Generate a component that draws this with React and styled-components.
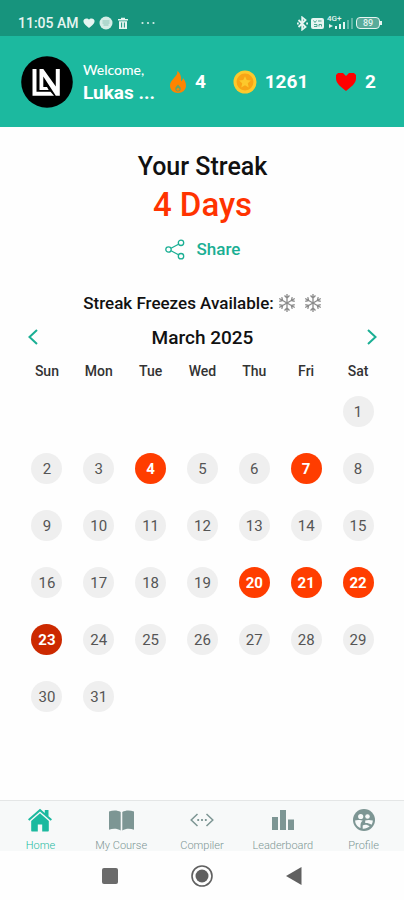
import React from "react";
import styled, { createGlobalStyle } from "styled-components";

const WEEKDAYS = ["Sun", "Mon", "Tue", "Wed", "Thu", "Fri", "Sat"];
const STREAK_DAYS = [4, 7, 20, 21, 22];
const TODAY = 23;
const FIRST_WEEKDAY = 6;
const DAYS_IN_MONTH = 31;

const StatusBar = () => (
  <StatusRow>
    <StatusGroup>
      <span>11:05 AM</span>
      <svg width="12" height="12" viewBox="0 0 12 12" fill="#e6f5f1">
        <path d="M3.5 1.5C4.5 1.5 5.5 2 6 2.5 6.5 2 7.5 1.5 8.5 1.5 10.5 1.5 12 3 11.5 5 11 7 8.5 9 6 11 3.5 9 1 7 .5 5 0 3 1.5 1.5 3.5 1.5z" />
      </svg>
      <svg width="14" height="14" viewBox="0 0 14 14">
        <circle cx="7" cy="7" r="6.5" fill="#d5ede7" />
        <path d="M3.5 5h7M3.5 7h7M4.5 9h5" stroke="#8cc4b6" strokeWidth="1.2" />
      </svg>
      <TrashIcon width="12" height="13" viewBox="0 0 12 13" fill="#e6f5f1">
        <path d="M1 2h3V.8h4V2h3v1.5H1zM2 4.2h8V12H2z" />
        <path d="M4.6 5.5v5M7.4 5.5v5" stroke="#17947d" strokeWidth="1" />
      </TrashIcon>
      <svg width="14" height="4" viewBox="0 0 14 4" fill="#d5ede7">
        <circle cx="1.5" cy="2" r="1.1" />
        <circle cx="7" cy="2" r="1.1" />
        <circle cx="12.5" cy="2" r="1.1" />
      </svg>
    </StatusGroup>
    <SystemIcons>
      <svg width="11" height="15" viewBox="0 0 11 15" fill="none" stroke="#e6f5f1" strokeWidth="1.8">
        <path d="M1.5 4l7 7-3.3 2.6V1.4L8.5 4l-7 7" />
        <path d="M0 7.5h1.8M9.2 7.5H11" />
      </svg>
      <svg width="13" height="11" viewBox="0 0 13 11">
        <rect width="13" height="11" rx="2" fill="#e6f5f1" />
        <path d="M2.5 2.5l1.5 2 1.5-2M7 3h3.5M3 6.5h3v2H3M8 8.5v-2h2.5v2" fill="none" stroke="#4ba793" strokeWidth="1" />
      </svg>
      <Signal>
        <SignalLabel>4G+</SignalLabel>
        <svg width="26" height="12" viewBox="0 0 26 12" fill="#e6f5f1">
          <path d="M2 7l4 2-4 2zM8 9h2v3H8zM12 7h2v5h-2zM16 5h2v7h-2z" />
          <path d="M20 3h2v9h-2zM24 1h2v11h-2z" opacity=".35" />
        </svg>
      </Signal>
      <Battery>
        <span>89</span>
      </Battery>
    </SystemIcons>
  </StatusRow>
);

const LogoAvatar = () => (
  <svg width="52" height="52" viewBox="0 0 52 52" role="img" aria-label="Lukas">
    <circle cx="26" cy="26" r="25.8" fill="#000" />
    <g fill="#fff">
      <path d="M11.5 13h4v22.7h14l3.5 4H11.5z" />
      <path d="M18.5 13h3.8l12.5 17.5V13h4v26.7h-4L22.3 20.5V31h3.7l1.7 3h-9.2z" />
    </g>
  </svg>
);

const FlameIcon = () => (
  <svg width="18" height="24" viewBox="0 0 18 24">
    <path
      d="M8.2 1c.7 3-1.2 4.6-3.4 7.3C2.7 10.9 1 12.8 1 15.5 1 20 4.5 23 9 23s8-3 8-7.5c0-3.2-1.5-5.5-3-7.5-.2 1.5-.8 2.6-2 3.2C12.5 7 11.5 3 8.2 1z"
      fill="#ff8400"
    />
    <path d="M9 14.5c1.6 1.7 2.7 2.6 2.7 4.2a2.7 2.7 0 0 1-5.4 0c0-1.6 1.1-2.5 2.7-4.2z" fill="#5fa66b" />
    <path d="M9 18a1.5 1.5 0 0 1 1 2.6H8A1.5 1.5 0 0 1 9 18z" fill="#ff8400" />
  </svg>
);

const CoinIcon = () => (
  <svg width="24" height="24" viewBox="0 0 25 25">
    <circle cx="12.5" cy="12.5" r="12" fill="#fdc92c" />
    <circle cx="12.5" cy="12.5" r="8.8" fill="#f8a516" />
    <path
      d="M12.5 6.5l1.8 4 4.3.4-3.2 2.9 1 4.3-3.9-2.3-3.9 2.3 1-4.3-3.2-2.9 4.3-.4z"
      fill="#fdc92c"
    />
  </svg>
);

const HeartIcon = () => (
  <svg width="22" height="20" viewBox="0 0 22 20">
    <path d="M11 19C6 15 1 11.5 1 6.500V3l2-2h5l3 3 3-3h5l2 2v3.500C21 11.500 16 15 11 19z" fill="#f00" />
  </svg>
);

const ShareIcon = () => (
  <svg width="20" height="21" viewBox="0 0 20 21" fill="none" stroke="currentColor" strokeWidth="1.3">
    <circle cx="3.5" cy="10.5" r="2.7" />
    <circle cx="16" cy="3.8" r="2.7" />
    <circle cx="16" cy="17.2" r="2.7" />
    <path d="M6 9.2l7.5-4M6 11.8l7.5 4" />
  </svg>
);

const SnowflakeIcon = () => (
  <svg width="18" height="20" viewBox="0 0 18 20" fill="none" stroke="#8a8a8a" strokeWidth="1.3">
    {[0, 60, 120, 180, 240, 300].map((angle) => (
      <path key={angle} d="M9 10V1M6.5 2.5L9 5l2.5-2.5" transform={`rotate(${angle} 9 10)`} />
    ))}
  </svg>
);

const HomeIcon = () => (
  <svg width="24" height="24" viewBox="0 0 24 24" fill="currentColor">
    <path d="M12 .8L0 11.3l1.3 1.5L12 3.5l10.7 9.3 1.3-1.5-3.5-3.1V2h-3.7v3z" />
    <path d="M12 5.3L3.2 13v9.5c0 .6.4 1 1 1h5.6v-7h4.4v7h5.6c.6 0 1-.4 1-1V13z" />
  </svg>
);

const BookIcon = () => (
  <svg width="25" height="21" viewBox="0 0 25 21" fill="currentColor">
    <path d="M0 1.5C4 0 8.5 0 11.7 2v18.5C8.5 18.5 4 18.3 0 19.7zM25 1.5C21 0 16.5 0 13.3 2v18.5c3.2-2 7.7-2.2 11.7-.8z" />
  </svg>
);

const CodeIcon = () => (
  <svg width="24" height="14" viewBox="0 0 24 14" fill="none" stroke="currentColor" strokeWidth="1.5">
    <path d="M7.5 1L1.2 7l6.3 6M16.5 1l6.3 6-6.3 6" />
    <path d="M7.3 7h1.8M11.1 7h1.8M14.9 7h1.8" strokeWidth="1.8" />
  </svg>
);

const ChartIcon = () => (
  <svg width="22" height="20" viewBox="0 0 22 20" fill="currentColor">
    <path d="M0 7h6v13H0zM8 0h6v20H8zM16 9.5h6V20h-6z" />
  </svg>
);

const ProfileIcon = () => (
  <svg width="22" height="22" viewBox="0 0 22 22">
    <circle cx="11" cy="11" r="11" fill="currentColor" />
    <g fill="#f7f9f9">
      <circle cx="7.7" cy="7.5" r="2.6" />
      <circle cx="14.5" cy="7.5" r="2.3" />
      <path d="M2.2 11.6C4 10.8 8 10.7 9.8 11.8c-1.7 1-2.3 2.7-2.3 4.5v2.8C4.3 17.8 2 15 2.2 11.6zM12.2 11.5c2.2-.8 5.3-.7 7.6.1 0 1.5-.5 3-1.3 4.1-1.8-1.3-4.4-1.9-6.3-1.7z" />
      <path d="M9.7 16.5c1.5-1.3 5-1 7 .8-1.9 1.8-4.5 2.6-7 2.4z" />
    </g>
  </svg>
);

const TABS = [
  { label: "Home", icon: <HomeIcon />, active: true },
  { label: "My Course", icon: <BookIcon /> },
  { label: "Compiler", icon: <CodeIcon /> },
  { label: "Leaderboard", icon: <ChartIcon /> },
  { label: "Profile", icon: <ProfileIcon /> },
];

const Header = () => (
  <HeaderRow>
    <LogoAvatar />
    <Greeting>
      <Welcome>Welcome,</Welcome>
      <UserName>Lukas ...</UserName>
    </Greeting>
    <Stats>
      <Stat>
        <FlameIcon />4
      </Stat>
      <Stat>
        <CoinIcon />
        1261
      </Stat>
      <Stat>
        <HeartIcon />2
      </Stat>
    </Stats>
  </HeaderRow>
);

const Calendar = () => {
  const days = Array.from({ length: DAYS_IN_MONTH }, (_, i) => i + 1);
  const weeks = [];
  const cells = [...Array(FIRST_WEEKDAY).fill(null), ...days];
  while (cells.length) {
    const week = cells.splice(0, 7);
    weeks.push([...week, ...Array(7 - week.length).fill(null)]);
  }

  return (
    <section>
      <MonthRow>
        <ArrowButton type="button" aria-label="Previous month">
          <svg width="10" height="16" viewBox="0 0 10 16" fill="none" stroke="currentColor" strokeWidth="2">
            <path d="M9 1L1.5 8 9 15" />
          </svg>
        </ArrowButton>
        <Month>March 2025</Month>
        <ArrowButton type="button" aria-label="Next month">
          <svg width="10" height="16" viewBox="0 0 10 16" fill="none" stroke="currentColor" strokeWidth="2">
            <path d="M1 1l7.5 7L1 15" />
          </svg>
        </ArrowButton>
      </MonthRow>
      <CalendarTable>
        <thead>
          <tr>
            {WEEKDAYS.map((day) => (
              <Weekday key={day} scope="col">
                {day}
              </Weekday>
            ))}
          </tr>
        </thead>
        <tbody>
          {weeks.map((week, w) => (
            <tr key={w}>
              {week.map((day, d) => (
                <DayCell key={d}>
                  {day && (
                    <Day type="button" $streak={STREAK_DAYS.includes(day)} $today={day === TODAY}>
                      {day}
                    </Day>
                  )}
                </DayCell>
              ))}
            </tr>
          ))}
        </tbody>
      </CalendarTable>
    </section>
  );
};

const App = () => (
  <Page>
    <GlobalStyle />
    <StatusBar />
    <Header />
    <Main>
      <Title>Your Streak</Title>
      <StreakCount>4 Days</StreakCount>
      <ShareButton type="button">
        <ShareIcon />
        Share
      </ShareButton>
      <Freezes>
        <span>Streak Freezes Available:</span>
        <Snowflakes>
          <SnowflakeIcon />
          <SnowflakeIcon />
        </Snowflakes>
      </Freezes>
      <Calendar />
    </Main>
    <TabBar>
      {TABS.map((tab) => (
        <Tab key={tab.label} href="#" $active={tab.active}>
          <TabIcon>{tab.icon}</TabIcon>
          {tab.label}
        </Tab>
      ))}
    </TabBar>
    <SystemNav>
      <NavButton type="button" aria-label="Recent apps">
        <svg width="16" height="16" viewBox="0 0 16 16">
          <rect width="16" height="16" rx="2" fill="#6b6b6b" />
        </svg>
      </NavButton>
      <NavButton type="button" aria-label="Home screen">
        <svg width="22" height="22" viewBox="0 0 22 22">
          <circle cx="11" cy="11" r="10" fill="none" stroke="#606060" strokeWidth="1.6" />
          <circle cx="11" cy="11" r="6.5" fill="#606060" />
        </svg>
      </NavButton>
      <NavButton type="button" aria-label="Back">
        <svg width="16" height="18" viewBox="0 0 16 18">
          <path d="M15.5 0v18L0 9z" fill="#606060" />
        </svg>
      </NavButton>
    </SystemNav>
  </Page>
);

export default App;

const GlobalStyle = createGlobalStyle`
  * {
    box-sizing: border-box;
  }

  body {
    margin: 0;
    background: #fefefe;
    font-family: Roboto, "Liberation Sans", sans-serif;
  }

  button {
    border: 0;
    padding: 0;
    background: none;
    font: inherit;
    cursor: pointer;
  }

  svg {
    display: block;
    flex-shrink: 0;
  }
`;

const Page = styled.div`
  display: flex;
  flex-direction: column;
  min-height: 100vh;
`;

const StatusRow = styled.div`
  display: flex;
  justify-content: space-between;
  align-items: center;
  height: 36px;
  padding: 10px 24px 0 18px;
  background: #17947d;
  color: #e6f5f1;
  font-size: 14px;
  font-weight: 500;
`;

const StatusGroup = styled.div`
  display: flex;
  align-items: center;
  gap: 4px;
`;

const TrashIcon = styled.svg`
  margin-right: 8px;
`;

const SystemIcons = styled.div`
  display: flex;
  align-items: center;
  gap: 3px;
`;

const Signal = styled.div`
  position: relative;
`;

const SignalLabel = styled.span`
  position: absolute;
  top: -2px;
  left: 0;
  font-size: 8px;
  line-height: 8px;
`;

const Battery = styled.div`
  position: relative;
  display: flex;
  justify-content: center;
  align-items: center;
  width: 24px;
  height: 12px;
  border: 1px solid #e6f5f1;
  border-radius: 4px;
  background: #58ab9a;
  font-size: 9px;

  &::after {
    content: "";
    position: absolute;
    right: -3px;
    width: 2px;
    height: 4px;
    background: #e6f5f1;
  }
`;

const HeaderRow = styled.header`
  display: flex;
  align-items: center;
  height: 91px;
  padding: 0 28px 0 21px;
  background: #1cb99f;
  color: #fff;
`;

const Greeting = styled.div`
  margin-left: 10px;
`;

const Welcome = styled.div`
  font-family: Lato, Roboto, sans-serif;
  font-size: 14px;
  font-weight: 500;
  line-height: 22px;
`;

const UserName = styled.div`
  font-size: 19px;
  font-weight: 700;
  line-height: 24px;
`;

const Stats = styled.div`
  display: flex;
  flex: 1;
  justify-content: space-between;
  margin-left: 14px;
`;

const Stat = styled.div`
  display: flex;
  align-items: center;
  gap: 8px;
  font-size: 19px;
  font-weight: 700;
`;

const Main = styled.main`
  flex: 1;
  padding: 24px 20px 16px 21px;
  text-align: center;
`;

const Title = styled.h1`
  margin: 0;
  color: #111;
  font-size: 25px;
  font-weight: 500;
  line-height: 32px;
`;

const StreakCount = styled.p`
  margin: 0;
  color: #ff3300;
  font-size: 33px;
  font-weight: 500;
  line-height: 44px;
`;

const ShareButton = styled.button`
  display: inline-flex;
  align-items: center;
  gap: 12px;
  height: 44px;
  color: #1aaf94;
  font-size: 17px;
  font-weight: 500;
`;

const Freezes = styled.div`
  display: flex;
  justify-content: center;
  align-items: center;
  gap: 4px;
  height: 24px;
  margin-top: 20px;
  color: #111;
  font-size: 17px;
  font-weight: 500;
`;

const Snowflakes = styled.div`
  display: flex;
  gap: 8px;
`;

const MonthRow = styled.div`
  display: flex;
  justify-content: space-between;
  align-items: center;
  height: 44px;
  padding: 0 7px;
`;

const ArrowButton = styled.button`
  color: #1aaf94;
`;

const Month = styled.h2`
  margin: 0;
  color: #111;
  font-size: 19px;
  font-weight: 500;
`;

const CalendarTable = styled.table`
  width: 100%;
  border-collapse: collapse;
  table-layout: fixed;
`;

const Weekday = styled.th`
  height: 24px;
  padding: 0;
  color: #333;
  font-size: 14px;
  font-weight: 500;
`;

const DayCell = styled.td`
  height: 57px;
  padding: 0;
`;

const Day = styled.button`
  width: 31px;
  height: 31px;
  border-radius: 50%;
  background: ${({ $streak, $today }) => ($today ? "#cc2900" : $streak ? "#ff3d00" : "#efefef")};
  color: ${({ $streak, $today }) => ($streak || $today ? "#fff" : "#555")};
  font-size: 15px;
  font-weight: ${({ $streak, $today }) => ($streak || $today ? 700 : 400)};
`;

const TabBar = styled.nav`
  display: flex;
  height: 51px;
  border-top: 1px solid #e4e6e6;
  background: #f7f9f9;
`;

const Tab = styled.a`
  display: flex;
  flex: 1;
  flex-direction: column;
  align-items: center;
  color: ${({ $active }) => ($active ? "#1cb99f" : "#7d9694")};
  font-size: 11px;
  font-weight: 300;
  line-height: 14px;
  text-decoration: none;
`;

const TabIcon = styled.span`
  display: flex;
  flex-shrink: 0;
  justify-content: center;
  align-items: center;
  height: 38px;
`;

const SystemNav = styled.div`
  display: flex;
  justify-content: center;
  align-items: center;
  gap: 60px;
  height: 49px;
`;

const NavButton = styled.button`
  display: flex;
  justify-content: center;
  align-items: center;
  width: 32px;
  height: 32px;
`;
